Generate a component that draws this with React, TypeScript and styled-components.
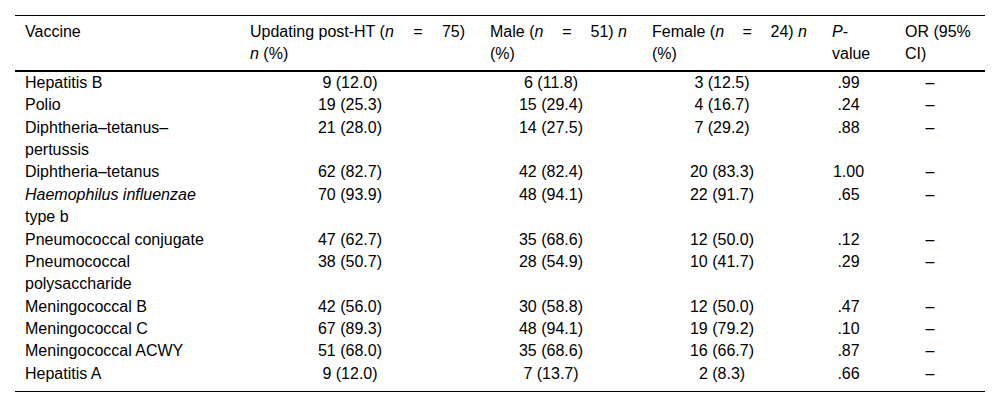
import React from "react";
import styled, { createGlobalStyle } from "styled-components";

const GlobalStyle = createGlobalStyle`
  body {
    margin: 0;
    background: #fff;
  }
`;

const Page = styled.div`
  padding: 15px;
  font-family: "Liberation Sans", Arial, sans-serif;
  font-size: 16px;
  line-height: 1.4;
  color: #000;
`;

const Table = styled.table`
  width: 970px;
  table-layout: fixed;
  border-collapse: collapse;
  border-top: 1px solid #000;
  border-bottom: 1px solid #000;

  tbody tr:last-child td {
    padding-bottom: 6px;
  }
`;

const HeadCell = styled.th<{ $last?: boolean }>`
  padding: 5px ${(p) => (p.$last ? "5px" : "15px")} 4px 10px;
  text-align: left;
  font-weight: normal;
  vertical-align: top;
  border-bottom: 2px solid #000;
`;

// first header line is spread over the whole cell, as in the source
const HeadLine = styled.span`
  display: flex;
  justify-content: space-between;
  white-space: nowrap;
`;

const Cell = styled.td<{ $first?: boolean }>`
  padding: ${(p) => (p.$first ? "0 15px 0 10px" : "0 30px 0 10px")};
  text-align: ${(p) => (p.$first ? "left" : "center")};
  vertical-align: top;
`;

type Row = [React.ReactNode, string, string, string, string];

const rows: Row[] = [
  ["Hepatitis B", "9 (12.0)", "6 (11.8)", "3 (12.5)", ".99"],
  ["Polio", "19 (25.3)", "15 (29.4)", "4 (16.7)", ".24"],
  ["Diphtheria–tetanus–pertussis", "21 (28.0)", "14 (27.5)", "7 (29.2)", ".88"],
  ["Diphtheria–tetanus", "62 (82.7)", "42 (82.4)", "20 (83.3)", "1.00"],
  [
    <>
      <i>Haemophilus influenzae</i> type b
    </>,
    "70 (93.9)",
    "48 (94.1)",
    "22 (91.7)",
    ".65",
  ],
  ["Pneumococcal conjugate", "47 (62.7)", "35 (68.6)", "12 (50.0)", ".12"],
  ["Pneumococcal polysaccharide", "38 (50.7)", "28 (54.9)", "10 (41.7)", ".29"],
  ["Meningococcal B", "42 (56.0)", "30 (58.8)", "12 (50.0)", ".47"],
  ["Meningococcal C", "67 (89.3)", "48 (94.1)", "19 (79.2)", ".10"],
  ["Meningococcal ACWY", "51 (68.0)", "35 (68.6)", "16 (66.7)", ".87"],
  ["Hepatitis A", "9 (12.0)", "7 (13.7)", "2 (8.3)", ".66"],
];

const App = () => (
  <Page>
    <GlobalStyle />
    <Table>
      <colgroup>
        <col style={{ width: 225 }} />
        <col style={{ width: 240 }} />
        <col style={{ width: 162 }} />
        <col style={{ width: 180 }} />
        <col style={{ width: 73 }} />
        <col style={{ width: 90 }} />
      </colgroup>
      <thead>
        <tr>
          <HeadCell>Vaccine</HeadCell>
          <HeadCell>
            <HeadLine>
              <span>
                Updating post-HT (<i>n</i>
              </span>
              <span>=</span>
              <span>75)</span>
            </HeadLine>
            <i>n</i> (%)
          </HeadCell>
          <HeadCell>
            <HeadLine>
              <span>
                Male (<i>n</i>
              </span>
              <span>=</span>
              <span>
                51) <i>n</i>
              </span>
            </HeadLine>
            (%)
          </HeadCell>
          <HeadCell>
            <HeadLine>
              <span>
                Female (<i>n</i>
              </span>
              <span>=</span>
              <span>
                24) <i>n</i>
              </span>
            </HeadLine>
            (%)
          </HeadCell>
          <HeadCell>
            <i>P</i>-value
          </HeadCell>
          <HeadCell $last>OR (95% CI)</HeadCell>
        </tr>
      </thead>
      <tbody>
        {rows.map((r, i) => (
          <tr key={i}>
            <Cell $first>{r[0]}</Cell>
            <Cell>{r[1]}</Cell>
            <Cell>{r[2]}</Cell>
            <Cell>{r[3]}</Cell>
            <Cell>{r[4]}</Cell>
            <Cell>–</Cell>
          </tr>
        ))}
      </tbody>
    </Table>
  </Page>
);

export default App;
